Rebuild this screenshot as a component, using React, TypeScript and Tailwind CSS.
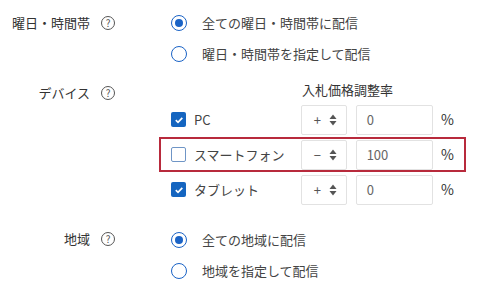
import React from "react"

const font = { fontFamily: '"Noto Sans CJK JP", "Noto Sans", sans-serif' }

function Help() {
  return (
    <span className="flex w-[14px] h-[14px] items-center justify-center rounded-full border border-[#555] text-[10px] leading-none text-[#555]">
      ?
    </span>
  )
}

function Label({ text, pt = "" }: { text: string; pt?: string }) {
  return (
    <div className={`w-[159px] shrink-0 flex justify-end items-center gap-[11px] pr-[44px] ${pt}`}>
      <span className="text-[13px] text-[#333]">{text}</span>
      <Help />
    </div>
  )
}

function Radio({ checked, text }: { checked?: boolean; text: string }) {
  return (
    <div className="flex items-center gap-[15px] pl-[12px] h-[31px]">
      <span className="flex w-[16px] h-[16px] items-center justify-center rounded-full border-[1.5px] border-[#1a63c6]">
        {checked && <span className="w-[8px] h-[8px] rounded-full bg-[#1a63c6]" />}
      </span>
      <span className="text-[13px] text-[#444]">{text}</span>
    </div>
  )
}

function Check({ checked }: { checked?: boolean }) {
  return checked ? (
    <span className="flex w-[15px] h-[15px] items-center justify-center rounded-[2px] bg-[#1565c0]">
      <svg width="10" height="10" viewBox="0 0 10 10">
        <path d="M1.8 5.2 L4 7.3 L8.3 2.8" fill="none" stroke="#fff" strokeWidth="1.7" />
      </svg>
    </span>
  ) : (
    <span className="w-[15px] h-[15px] rounded-[2px] border-[1.5px] border-[#6f95c6]" />
  )
}

function UpDown() {
  return (
    <svg width="8" height="12" viewBox="0 0 8 12">
      <path d="M4 0.5 L7.5 5 L0.5 5 Z" fill="#555" />
      <path d="M4 11.5 L7.5 7 L0.5 7 Z" fill="#555" />
    </svg>
  )
}

function DeviceRow({ name, checked, sign, value, highlight }: { name: string; checked?: boolean; sign: string; value: string; highlight?: boolean }) {
  return (
    <div
      className={`flex items-center w-[307px] h-[35px] px-[10px] border-2 ${highlight ? "border-[#b82a3c]" : "border-transparent"}`}
    >
      <div className="w-[131px] flex items-center gap-[8px]">
        <Check checked={checked} />
        <span className="text-[13px] text-[#444]">{name}</span>
      </div>
      <div className="flex items-center w-[46px] h-[30px] border border-[#e2e2e2] rounded-[2px] pl-[11px] gap-[7px]">
        <span className="text-[13px] text-[#555] w-[9px] text-center">{sign}</span>
        <UpDown />
      </div>
      <div className="flex items-center w-[78px] h-[30px] ml-[9px] border border-[#e2e2e2] rounded-[2px] pl-[10px]">
        <span className="text-[13px] text-[#666]">{value}</span>
      </div>
      <span className="ml-[8px] text-[14px] text-[#333]">%</span>
    </div>
  )
}

export default function App() {
  return (
    <div className="w-[500px] h-[296px] bg-white overflow-hidden" style={font}>
      <div className="flex pt-[7px]">
        <Label text="曜日・時間帯" pt="h-[31px]" />
        <div className="flex flex-col">
          <Radio checked text="全ての曜日・時間帯に配信" />
          <Radio text="曜日・時間帯を指定して配信" />
        </div>
      </div>

      <div className="flex mt-[11px]">
        <Label text="デバイス" pt="h-[26px] pb-[0px]" />
        <div className="flex flex-col">
          <div className="h-[22px] pl-[143px] text-[13px] leading-[20px] text-[#333]">入札価格調整率</div>
          <DeviceRow name="PC" checked sign="+" value="0" />
          <DeviceRow name="スマートフォン" sign="−" value="100" highlight />
          <DeviceRow name="タブレット" checked sign="+" value="0" />
        </div>
      </div>

      <div className="flex mt-[17px]">
        <Label text="地域" pt="h-[30px]" />
        <div className="flex flex-col">
          <Radio checked text="全ての地域に配信" />
          <Radio text="地域を指定して配信" />
        </div>
      </div>
    </div>
  )
}
